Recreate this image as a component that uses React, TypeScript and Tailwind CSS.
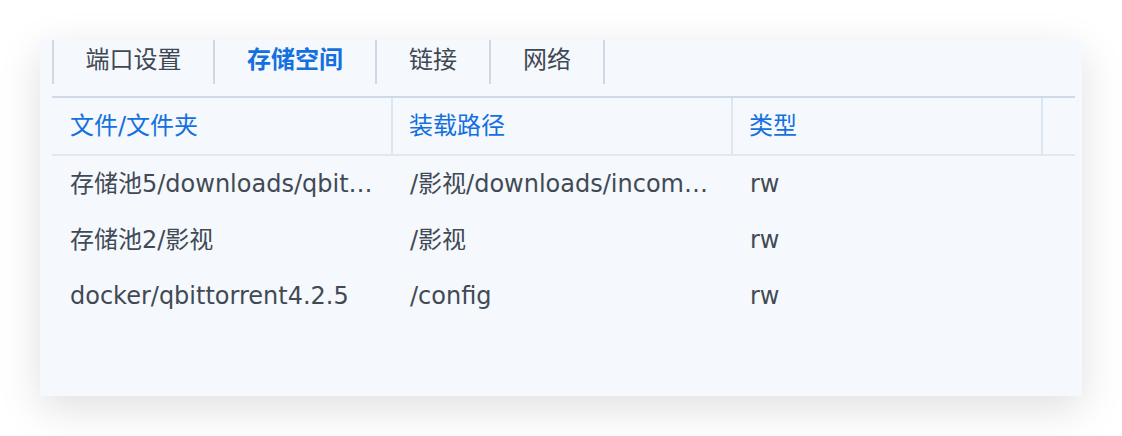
import React from "react";

const tabs = [
  { label: "端口设置", w: "w-[163px] border-l-2", active: false },
  { label: "存储空间", w: "w-[162px]", active: true },
  { label: "链接", w: "w-[114px]", active: false },
  { label: "网络", w: "w-[114px]", active: false },
];

const rows = [
  ["存储池5/downloads/qbit…", "/影视/downloads/incom…", "rw"],
  ["存储池2/影视", "/影视", "rw"],
  ["docker/qbittorrent4.2.5", "/config", "rw"],
];

export default function App() {
  return (
    <div
      className="w-[1122px] h-[436px] bg-white pt-[40px] pl-[40px] overflow-hidden"
      style={{ fontFamily: '"DejaVu Sans", "Noto Sans CJK SC", sans-serif' }}
    >
      <div className="w-[1042px] h-[356px] bg-[#f5f8fd] shadow-[0_12px_40px_rgba(0,0,0,0.13)] pl-[12px] pr-[7px]">
        <div className="flex h-[44px]">
          {tabs.map((t) => (
            <div
              key={t.label}
              className={`${t.w} border-r-2 border-[#cfd9e5] flex items-center justify-center pb-[5px] text-[24px] leading-none ${
                t.active ? "text-[#1470de] font-bold" : "text-[#3f4852]"
              }`}
            >
              {t.label}
            </div>
          ))}
        </div>
        <div className="mt-[12px] border-t-2 border-[#cfdae6]">
          <div className="grid grid-cols-[341px_340px_310px_1fr] h-[58px] border-b-2 border-[#e0e9f3]">
            {["文件/文件夹", "装载路径", "类型", ""].map((h, i) => (
              <div
                key={i}
                className={`flex items-center text-[24px] leading-none text-[#1470de] ${
                  i === 0 ? "pl-[18px]" : "pl-[16px]"
                } ${i < 3 ? "border-r-2 border-[#dce6f0]" : ""}`}
              >
                {h}
              </div>
            ))}
          </div>
          {rows.map((r, ri) => (
            <div key={ri} className="grid grid-cols-[341px_340px_310px_1fr] h-[56px]">
              {r.map((c, ci) => (
                <div
                  key={ci}
                  className={`flex items-center text-[24px] leading-none text-[#414a54] whitespace-nowrap overflow-hidden ${
                    ci === 0 ? "pl-[18px]" : "pl-[17px]"
                  }`}
                >
                  {c}
                </div>
              ))}
              <div />
            </div>
          ))}
        </div>
      </div>
    </div>
  );
}
